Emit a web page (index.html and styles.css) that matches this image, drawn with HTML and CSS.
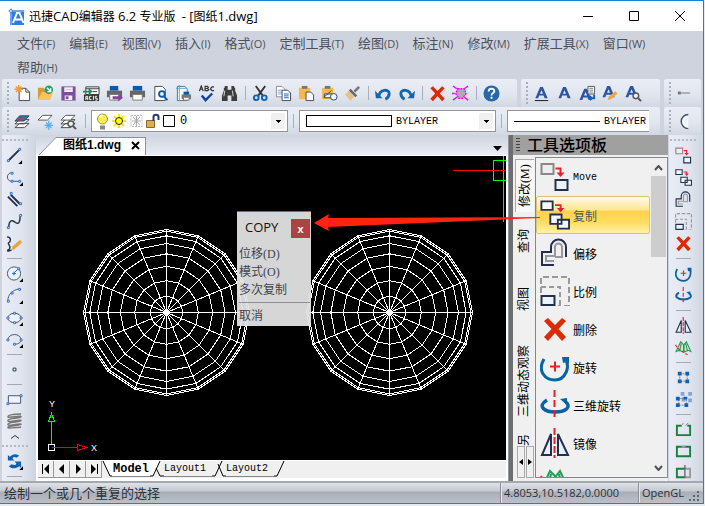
FILE: index.html
```html
<!DOCTYPE html>
<html lang="zh-CN">
<head>
<meta charset="utf-8">
<title>迅捷CAD编辑器 6.2 专业版 - [图纸1.dwg]</title>
<link rel="stylesheet" href="styles.css">
</head>
<body>
<svg class="sprite" aria-hidden="true">
  <symbol id="move" viewBox="0 0 30 30"><path d="M1.5 2h12v10h-12z" fill="#eee" stroke="#888" stroke-width="2"/><path d="M15.500 6.500h5v6" fill="none" stroke="#e8202a" stroke-width="2"/><path d="M16.500 10.500h8l-4 4.500z" fill="#e8202a"/><path d="M15.500 18h12v10h-12z" fill="#eaf4fc" stroke="#22304d" stroke-width="2"/></symbol>
  <symbol id="copy" viewBox="0 0 32 32"><path d="M1.500 1.500h12v9h-12z" fill="#f4f8fc" stroke="#22304d" stroke-width="2"/><path d="M16 5.500h6v5" fill="none" stroke="#e8202a" stroke-width="2"/><path d="M18 8.500h8l-4 4.500z" fill="#e8202a"/><path d="M11 15.500h12v10H11zM19 21h12v9.500H19z" fill="#f4f8fc" stroke="#22304d" stroke-width="2"/></symbol>
  <symbol id="offset" viewBox="0 0 30 30"><path d="M14 27H2V14h9V9a7.500 7.500 0 0 1 15 0v10" fill="none" stroke="#22304d" stroke-width="2"/><path d="M14 23H6v-5h9V9a3.500 3.500 0 0 1 7 0v10h-7" fill="none" stroke="#999" stroke-width="2"/></symbol>
  <symbol id="scale" viewBox="0 0 30 30"><path d="M1 17V1h28v29H18" fill="none" stroke="#999" stroke-width="2" stroke-dasharray="6 3"/><path d="M1 11h19v18" fill="none" stroke="#999" stroke-width="2" stroke-dasharray="5 3"/><path d="M1.500 20h13v9h-13z" fill="#eaf4fc" stroke="#22304d" stroke-width="2"/></symbol>
  <symbol id="erase" viewBox="0 0 30 30"><path d="M4 7l4-3 7 7 7-7 4 3-7.500 8 7.500 8-4 4-7-8-7 8-4-4 7.500-8z" fill="#db2b04"/></symbol>
  <symbol id="rotate" viewBox="0 0 30 30"><path d="M4 7c-7 12 1 21 11 21S31 15 25 7" fill="none" stroke="#0863a5" stroke-width="3"/><path d="M22 5h7v7l-3-2-3 1z" fill="#0863a5"/><path d="M10 14.500h10M15 9.500v10" stroke="#e8202a" stroke-width="2"/></symbol>
  <symbol id="rotate3d" viewBox="0 0 30 30"><path d="M7 10C-4 17 6 22 15 22s18-4 10-11" fill="none" stroke="#0863a5" stroke-width="3.500"/><path d="M20 9l7-1v7z" fill="#0863a5"/><path d="M14.500 0v30" stroke="#e8202a" stroke-width="2" stroke-dasharray="7 3"/></symbol>
  <symbol id="mirror" viewBox="0 0 30 30"><path d="M11 6v21H2zM18 6v21h10z" fill="#e6f1fa" stroke="#22304d" stroke-width="2"/><path d="M14.500 0v30" stroke="#e8202a" stroke-width="2" stroke-dasharray="7 2"/></symbol>
  <symbol id="mirror3d" viewBox="0 0 30 30"><path d="M2 22 10 5l5 5v13l-7-3zM28 22 20 5l-4 5v13l7-3zM8 22l3-14M22 22 19 8" fill="#d7ebdc" stroke="#2f9a55" stroke-width="2"/><path d="M1 10l3 6 18 12" fill="none" stroke="#e8202a" stroke-width="2" stroke-dasharray="5 3"/></symbol>
  <symbol id="letter" viewBox="0 0 18 18"><path fill-rule="evenodd" d="M7.500 2h3l5 12h-3.200l-1-2.800H6.500l-1 2.800H2.500zM9 5.500l-1.700 3.700h3.300z" fill="#2d55a0"/></symbol>
  <symbol id="magnify" viewBox="0 0 18 18"><circle cx="11.500" cy="11.500" r="3" fill="#e8f2fa" stroke="#555" stroke-width="1.500"/><path d="M14 14l3 3" stroke="#555" stroke-width="2"/></symbol>
  <symbol id="layers" viewBox="0 0 18 18"><path d="M1 15.500h10l5-4.500H6zM1 11.500h10l5-4.500H6z" fill="#fff" stroke="#444"/></symbol>
  <defs>
    <path id="hexdec" vector-effect="non-scaling-stroke" d="M83 0 76.700 31.800 58.700 58.700 31.800 76.700 0 83-31.800 76.700-58.700 58.700-76.700 31.800-83 0-76.700-31.800-58.700-58.700-31.800-76.700 0-83 31.800-76.700 58.700-58.700 76.700-31.800z"/>
    <g id="sphere">
      <use href="#hexdec"/><use href="#hexdec" transform="scale(.98)"/><use href="#hexdec" transform="scale(.924)"/><use href="#hexdec" transform="scale(.831)"/><use href="#hexdec" transform="scale(.707)"/><use href="#hexdec" transform="scale(.556)"/><use href="#hexdec" transform="scale(.383)"/><use href="#hexdec" transform="scale(.195)"/>
      <path d="M-83 0H83M0-83V83M-76.700-31.800 76.700 31.800M-58.700-58.700 58.700 58.700M-31.800-76.700 31.800 76.700M31.800-76.700-31.800 76.700M58.700-58.700-58.700 58.700M76.700-31.800-76.700 31.800"/>
      <circle r="2.500" fill="#fff"/>
    </g>
  </defs>
</svg>

<div class="window">
  <header class="titlebar">
    <svg class="applogo" viewBox="0 0 17 17"><path d="M2 2h14v15H2z" fill="#2f7be6"/><path d="M0 3h17M3 0v17" stroke="#a9cdfb"/><path d="M5 15 9 5h2.500l4 10M7 11.500h7" fill="none" stroke="#fff" stroke-width="2"/><circle cx="3" cy="3" r="1.500" fill="#fff" stroke="#2f7be6"/></svg>
    <h1>迅捷<span>CAD</span>编辑器 <span>6.2</span> 专业版&nbsp; <span>- [</span>图纸<span>1.dwg]</span></h1>
    <button class="winbtn" aria-label="最小化"><svg viewBox="0 0 12 12"><path d="M1 6.500h10"/></svg></button>
    <button class="winbtn" aria-label="最大化"><svg viewBox="0 0 12 12"><path d="M1.500 1.500h9v9h-9z"/></svg></button>
    <button class="winbtn" aria-label="关闭"><svg viewBox="0 0 12 12"><path d="M1 1l10 10M11 1 1 11"/></svg></button>
  </header>

  <nav class="menubar">
    <button>文件<span>(F)</span></button><button>编辑<span>(E)</span></button><button>视图<span>(V)</span></button><button>插入<span>(I)</span></button><button>格式<span>(O)</span></button><button>定制工具<span>(T)</span></button><button>绘图<span>(D)</span></button><button>标注<span>(N)</span></button><button>修改<span>(M)</span></button><button>扩展工具<span>(X)</span></button><button>窗口<span>(W)</span></button><button>帮助<span>(H)</span></button>
  </nav>

  <div class="toolrow">
    <div class="toolbar grow">
      <i class="grip"></i>
      <button class="tool" aria-label="新建"><svg viewBox="0 0 18 18"><path d="M5.500 3.500h7l4 4v9h-11z" fill="#fff" stroke="#444"/><path d="M12.500 3.500v4h4" fill="none" stroke="#444"/><path d="M5 0v9M.5 4.500h9M2 1.500l6 6M8 1.500l-6 6" stroke="#f0a023" stroke-width="1.500"/></svg></button>
      <button class="tool" aria-label="打开"><svg viewBox="0 0 18 18"><path d="M1 3h6l1 2h5v3H6l-5 8z" fill="#d99b35"/><path d="M5 8h12l-3 8H1z" fill="#fcc45a"/><circle cx="12.500" cy="5" r="4.500" fill="#27a064"/><path d="M10.500 3l4 4m0-3.500V7h-3.500" fill="none" stroke="#fff" stroke-width="1.500"/></svg></button>
      <button class="tool" aria-label="保存"><svg viewBox="0 0 18 18"><path d="M1.500 1.500h15v15h-15z" fill="#7d4e9c"/><path d="M4.500 2.500h9v5h-9zM5 11h8v5H5z" fill="#f4f0f8"/><path d="M6 5h6" stroke="#c9b8d8"/><path d="M6 13.500h3" stroke="#7d4e9c" stroke-width="3"/></svg></button>
      <button class="tool" aria-label="导入 ACIS"><svg viewBox="0 0 18 18"><path d="M3 2h14v8H3z" fill="#fff" stroke="#333"/><path d="M3 4h14M10 7h5" stroke="#333"/><path d="M1 10h16v7H1z" fill="#333"/><path d="M3 16v-4h2v4M3 14h2M9 12H7v3.500h2M11 11.500v4.500M15 12h-2v2h2v2h-2" fill="none" stroke="#fff"/><path d="M0 6h6V3l4 4-4 4V8H0z" fill="#1f8a56"/></svg></button>
      <button class="tool" aria-label="打印输出"><svg viewBox="0 0 18 18"><path d="M4 1h9v5H4z" fill="#0c58ac"/><path d="M1 6h16v7H1z" fill="#666"/><path d="M4 10h10v6H4z" fill="#fff" stroke="#777"/><path d="M7 12h6V9.500l5 4-5 4V15H7z" fill="#86439b"/></svg></button>
      <button class="tool" aria-label="打印"><svg viewBox="0 0 18 18"><path d="M4 1h10v5H4z" fill="#0c58ac"/><path d="M1 6h16v7H1z" fill="#666"/><path d="M4 10h10v6H4z" fill="#fff" stroke="#777"/></svg></button>
      <button class="tool" aria-label="打印预览"><svg viewBox="0 0 18 18"><path d="M3 1.500h8l3 3V16.500H3z" fill="#fff" stroke="#444"/><circle cx="10.500" cy="9.500" r="3" fill="#e8f4fc" stroke="#0c58ac" stroke-width="2"/><path d="M12.500 12l4 4" stroke="#0c58ac" stroke-width="2"/></svg></button>
      <button class="tool" aria-label="页面设置"><svg viewBox="0 0 18 18"><path d="M2.500 1.500h8l2.500 3v12H2.500z" fill="#fff" stroke="#667"/><path d="M4.500 0v17M1 3.500h12" stroke="#45a9d8"/><path d="M9 7h6v4H9z" fill="#0c58ac"/><path d="M7 10h10v5H7z" fill="#777"/><path d="M9 13h6v3H9z" fill="#fff" stroke="#777"/></svg></button>
      <button class="tool" aria-label="拼写检查"><svg viewBox="0 0 18 18"><path d="M1.500 6.500 3.500 1l2 5.500M2.500 4.500h2M7.500 6V1.500H10L11 2.500 10 3.700H8h2L11.500 5 10 6zM17 2h-2l-1.500 1.500v1L15 6h2" fill="none" stroke="#333" stroke-width="1.300"/><path d="M4 11l4 5 7-7" fill="none" stroke="#0c44a4" stroke-width="2.500"/></svg></button>
      <button class="tool" aria-label="查找"><svg viewBox="0 0 18 18"><path d="M3 3h4v2h4V3h4v3l2 5v6h-6v-6H7v6H1v-6l2-5zM4 1h3v2H4zM11 1h3v2h-3z" fill="#3c3c3c"/><path d="M4 6l-1 6M12 6l1 6" stroke="#ddd"/></svg></button>
      <i class="sep"></i>
      <button class="tool" aria-label="剪切"><svg viewBox="0 0 18 18"><path d="M4 1l8 11M14 1 6 12" stroke="#333" stroke-width="2"/><circle cx="4.500" cy="13.500" r="2.500" fill="none" stroke="#0c62b8" stroke-width="2"/><circle cx="13" cy="13.500" r="2.500" fill="none" stroke="#0c62b8" stroke-width="2"/></svg></button>
      <button class="tool" aria-label="复制"><svg viewBox="0 0 18 18"><path d="M1.500 1.500h6l3 3v8h-9z" fill="#fff" stroke="#889"/><path d="M3 5.500h5M3 7.500h5M3 9.500h5" stroke="#7aa6d6"/><path d="M7.500 5.500h6l3 3v8h-9z" fill="#fff" stroke="#445"/><path d="M9.500 9.500h5M9.500 11.500h5M9.500 13.500h5" stroke="#0c62b8"/></svg></button>
      <button class="tool" aria-label="粘贴"><svg viewBox="0 0 18 18"><path d="M1 3h12v12H1z" fill="#f8b74c"/><path d="M4 1h6v3H4z" fill="#777"/><path d="M8.500 7.500h5l3 3v6h-8z" fill="#fff" stroke="#444"/></svg></button>
      <button class="tool" aria-label="选择性粘贴"><svg viewBox="0 0 18 18"><path d="M1 3h12v12H1z" fill="#f8b74c"/><path d="M4 1h6v3H4z" fill="#777"/><path d="M3.500 9.500h9v4h-9zM3 13l8-7" fill="#eaf4fc" stroke="#33415e"/><circle cx="13.500" cy="12.500" r="3.500" fill="#eaf4fc" stroke="#33415e"/></svg></button>
      <button class="tool" aria-label="格式刷"><svg viewBox="0 0 18 18"><path d="M15 1l2 2-5 5-2-2z" fill="#777"/><path d="M7 4l7 7-2 2-7-7z" fill="#666"/><path d="M5 6l6 6-4 5L1 10z" fill="#e9c08c"/></svg></button>
      <i class="sep"></i>
      <button class="tool" aria-label="撤销"><svg viewBox="0 0 18 18"><path d="M4 12C5 4 15 4 15 9c0 3-2 5-4 6" fill="none" stroke="#1464ae" stroke-width="3"/><path d="M0 6l8 8H1z" fill="#1464ae"/></svg></button>
      <button class="tool" aria-label="重做"><svg viewBox="0 0 18 18"><path d="M14 12C13 4 3 4 3 9c0 3 2 5 4 6" fill="none" stroke="#1464ae" stroke-width="3"/><path d="M18 6l-8 8h7z" fill="#1464ae"/></svg></button>
      <i class="sep"></i>
      <button class="tool" aria-label="删除"><svg viewBox="2 2 26 26"><use href="#erase" width="30" height="30"/></svg></button>
      <button class="tool" aria-label="清理"><svg viewBox="0 0 18 18"><path d="M6 4h7l2 5-4 5H7L4 9z" fill="#b9a5b9" stroke="#f0e" stroke-width="1.500" stroke-dasharray="2 1"/><path d="M1 1l4 3M17 1l-4 3M1 16l4-3M17 16l-4-3M0 9h3" stroke="#f0e" stroke-width="1.500"/></svg></button>
      <i class="sep"></i>
      <button class="tool" aria-label="帮助"><svg viewBox="0 0 18 18"><circle cx="9" cy="9" r="8.500" fill="#2868a8"/><path d="M6 7c0-4 6-4 6-.5 0 2-3 2-3 4.500M9 12.500v2" fill="none" stroke="#fff" stroke-width="2"/></svg></button>
    </div>
    <div class="toolbar text-tools">
      <i class="grip"></i>
      <button class="tool" aria-label="多行文字"><svg viewBox="0 0 18 18"><use href="#letter"/><path d="M2 16.500h14" stroke="#111"/></svg></button>
      <button class="tool" aria-label="单行文字"><svg viewBox="0 0 18 18"><use href="#letter"/></svg></button>
      <button class="tool" aria-label="导入文字"><svg viewBox="0 0 18 18"><use href="#letter" x="-2" y="2"/><path d="M9.500 1.500h7v8h-7z" fill="#fff" stroke="#555"/><path d="M11 3.500h4M11 5.500h4M11 7.500h4" stroke="#777"/><path d="M16 10v4h-5m2-2-2.500 2 2.500 2" fill="none" stroke="#0c62b8" stroke-width="2"/></svg></button>
      <button class="tool" aria-label="编辑文字"><svg viewBox="0 0 18 18"><use href="#letter" x="-2" y="-1"/><path d="M6 16l1-3.500 7-6 2.500 2.500-7 6z" fill="#efa63a"/></svg></button>
      <button class="tool" aria-label="查找文字"><svg viewBox="0 0 18 18"><use href="#letter" x="-2" y="-1"/><use href="#magnify"/></svg></button>
    </div>
    <div class="toolbar narrow">
      <i class="grip"></i>
      <button class="tool" aria-label="标注"><svg viewBox="0 0 18 18"><path d="M3 8.500h12" stroke="#777"/><path d="M2 7h3v3H2z" fill="#777"/></svg></button>
    </div>
  </div>

  <div class="toolrow">
    <div class="toolbar grow layerbar">
      <i class="grip"></i>
      <button class="tool" aria-label="图层管理"><svg viewBox="0 0 18 18"><use href="#layers"/><path d="M1 8.500h10l5-5.500H6z" fill="#3773a8" stroke="#345"/><path d="M5 5h3v3H5z" fill="#f22"/></svg></button>
      <button class="tool" aria-label="冻结图层"><svg viewBox="0 0 18 18"><path d="M1 7.500h10l5-5H6z" fill="#fff" stroke="#555"/><path d="M12.500 8v10M8 13h9M9.500 10l6 6M15.500 10l-6 6" stroke="#5cacf0" stroke-width="1.300"/></svg></button>
      <button class="tool" aria-label="图层浏览"><svg viewBox="0 0 18 18"><use href="#layers"/><path d="M1 7.500h10l5-5H6z" fill="#fff" stroke="#555"/><use href="#magnify"/></svg></button>
      <i class="sep"></i>
      <div class="combo layer">
        <svg viewBox="0 0 84 20"><path d="M8 14.500h5v4H8z" fill="#888"/><circle cx="10.500" cy="8" r="5" fill="#f8ee4a" stroke="#a39a1b"/><path d="M8 6.500c0-2 2-2 2.500-2" stroke="#fff" fill="none" stroke-width="2"/><path d="M27 3v14M20 10h14M22 5l10 10M32 5 22 15" stroke="#ffe800" stroke-width="2"/><circle cx="27" cy="10" r="3.500" fill="#ff0" stroke="#222"/><path d="M39 4.500h11v11H39z" fill="none" stroke="#bbb" stroke-dasharray="2 1"/><path d="M44.500 5v10M40 10h9M41 6l7 8M48 6l-7 8" stroke="#aaa"/><path d="M54.500 9.500h8v7h-8z" fill="#dcae58" stroke="#8c6a25"/><path d="M61.500 10V6c0-3 5-3 5 0v3" fill="none" stroke="#223a7e" stroke-width="2"/><path d="M71.500 4.500h11v11h-11z" fill="#fff" stroke="#000"/></svg>
        <select aria-label="图层"><option>0</option></select>
      </div>
      <i class="sep"></i>
      <div class="combo color"><i class="swatch"></i><select aria-label="颜色"><option>BYLAYER</option></select></div>
      <i class="sep"></i>
      <div class="combo line"><i class="stroke"></i><select aria-label="线型"><option>BYLAYER</option></select></div>
    </div>
    <div class="toolbar narrow">
      <i class="grip"></i>
      <button class="tool" aria-label="圆弧"><svg viewBox="0 0 18 18"><path d="M13 1.500a7.500 7.500 0 1 0 0 15" fill="#f3f7fc" stroke="#44506b" stroke-width="1.500"/></svg></button>
    </div>
  </div>

  <main class="work">
    <aside class="side">
      <i class="hgrip"></i>
      <button class="tool" aria-label="直线"><svg viewBox="0 0 18 18"><path d="M3 14 14 3" stroke="#22304d" stroke-width="2"/><path class="node" d="M1.500 13.500h2v2h-2zM13.500 1.500h2v2h-2z"/><path d="M17 14v4h-4z"/></svg></button>
      <button class="tool" aria-label="多段线"><svg viewBox="0 0 18 18"><path d="M6 4C0 4 0 13 6 13h8" fill="none" stroke="#44506b"/><path class="node" d="M5.500 3.500h2v2h-2zM5.500 12h2v2h-2zM13.500 12h2v2h-2z"/><path d="M18 14v4h-4z"/></svg></button>
      <button class="tool" aria-label="多线"><svg viewBox="0 0 18 18"><path d="M5 4l10 10M2 6l10 10" stroke="#22304d" stroke-width="2"/><path class="node" d="M4.500 1.500h2v2h-2zM14.500 12.500h2v2h-2z"/></svg></button>
      <button class="tool" aria-label="样条曲线"><svg viewBox="0 0 18 18"><path d="M3 15c0-8 4-8 7-5 4 3 5-2 5-7" fill="none" stroke="#22304d" stroke-width="1.500"/><path class="node" d="M1.500 14.500h2v2h-2zM14.500 1.500h2v2h-2z"/></svg></button>
      <button class="tool" aria-label="徒手画"><svg viewBox="0 0 18 18"><path d="M1 2c5 0 4 5 2 6s2 3 1 6-3 1-2 3l4-1" fill="none" stroke="#22304d" stroke-width="1.500"/><path d="M6 16l1-4 8-7 2 3-8 7z" fill="#eaa33a"/></svg></button>
      <i class="hsep"></i>
      <button class="tool" aria-label="圆"><svg viewBox="0 0 18 18"><circle cx="8.500" cy="9" r="7" fill="#e9f1fb" stroke="#44506b"/><path d="M6.500 9h4M8.500 7v4M9 8l4-4" stroke="#1e5ca8"/><path class="node" d="M12.500 3h2v2h-2z"/><path d="M18 14v4h-4z"/></svg></button>
      <button class="tool" aria-label="圆弧"><svg viewBox="0 0 18 18"><path d="M2 14C2 8 7 3 14 2" fill="none" stroke="#44506b"/><path class="node" d="M1.500 14h2v2h-2zM5.500 5.500h2v2h-2zM13.500 1.500h2v2h-2z"/><path d="M18 14v4h-4z"/></svg></button>
      <button class="tool" aria-label="椭圆"><svg viewBox="0 0 18 18"><ellipse cx="9" cy="9.500" rx="7" ry="5" fill="#e9f1fb" stroke="#44506b"/><path class="node" d="M1 8.500h2v2H1zM15 8.500h2v2h-2zM8 3.500h2v2H8zM8 13.500h2v2H8z"/><path d="M18 14v4h-4z"/></svg></button>
      <button class="tool" aria-label="椭圆弧"><svg viewBox="0 0 18 18"><path d="M2 9C3 2 15 2 16 9c0 4-4 5-7 5" fill="none" stroke="#44506b"/><path class="node" d="M1 8.500h2v2H1zM15 8.500h2v2h-2zM8 13h2v2H8z"/><path d="M18 14v4h-4z"/></svg></button>
      <i class="hsep"></i>
      <button class="tool" aria-label="点"><svg viewBox="0 0 18 18"><path d="M7.500 7.500h3v3h-3z" fill="#fff" stroke="#22304d"/></svg></button>
      <i class="hsep"></i>
      <button class="tool" aria-label="矩形"><svg viewBox="0 0 18 18"><path d="M2.500 5h13v8h-13z" fill="#eef4fb" stroke="#44506b"/><path class="node" d="M1 12.500h2v2H1zM15 4h2v2h-2z"/></svg></button>
      <button class="tool" aria-label="螺旋"><svg viewBox="0 0 18 18"><path d="M16 1C10 1 2 2 2 4s14-2 14 0S2 5 2 8s14-2 14 0S2 9 2 12s14-2 14 0S2 13 2 15s9 0 14 0" fill="none" stroke="#777" stroke-width="1.500"/></svg></button>
      <button class="more" aria-label="更多"><svg viewBox="0 0 8 4"><path d="M0 3.500l4-3 4 3" fill="none" stroke="#333"/></svg></button>
      <i class="hgrip"></i>
      <button class="tool" aria-label="重画"><svg viewBox="0 0 18 18"><path d="M2 8V2l2 2c4-4 8-3 10-1l-3 2c-2-1-3-1-4 1l2 2zM16 9v7l-2-2c-4 3-8 3-11 0l3-2c3 1 4 1 5-1l-2-2z" fill="#1160b0"/><path d="M18 14v4h-4z"/></svg></button>
      <i class="hsep"></i>
    </aside>

    <section class="document">
      <div class="filetabs">
        <div class="filetab">
          <svg viewBox="0 0 20 20"><path d="M0 20 17 2.500h3V20z" fill="#fff"/><path d="M0 20 17 2.500h3" fill="none" stroke="#8c92a0"/></svg>
          <span>图纸1.dwg</span>
          <button aria-label="关闭文档"><svg viewBox="0 0 9 9"><path d="M1 1l7 7M8 1 1 8" stroke="#000" stroke-width="2"/></svg></button>
        </div>
        <button class="tablist" aria-label="文档列表"><svg viewBox="0 0 9 5"><path d="M0 0h9L4.500 5z"/></svg></button>
      </div>
      <div class="canvas">
        <svg class="drawing" viewBox="0 0 468 305" preserveAspectRatio="xMinYMin slice" shape-rendering="crispEdges">
          <g fill="none" stroke="#fff">
            <use href="#sphere" transform="translate(128.500 156.500)"/>
            <use href="#sphere" transform="translate(351.500 156.500)"/>
            <path d="M10.500 288.500h6v6h-6z"/>
          </g>
          <path d="M13.500 288V265M10.500 265.500l3-8 3 8zM468 4.500h-12.500v20H468M465.500 0v66" fill="none" stroke="#0f0"/>
          <path d="M14 291.500h25M39.500 288.500l9 3-9 3zM415 14.500h53" fill="none" stroke="#f00"/>
          <text x="11" y="251">Y</text><text x="53" y="295">X</text>
        </svg>
        <div class="popup" role="dialog" aria-label="COPY">
          <header><h2>COPY</h2><button aria-label="关闭">x</button></header>
          <button>位移(D)</button><button>模式(O)</button><button>多次复制</button>
          <hr>
          <button>取消</button>
        </div>
      </div>
      <div class="layouts">
        <button class="nav" aria-label="第一个"><svg viewBox="0 0 10 10"><path d="M1 0h1v10H1zM8 0v10L3 5z"/></svg></button>
        <button class="nav" aria-label="上一个"><svg viewBox="0 0 10 10"><path d="M7 0v10L2 5z"/></svg></button>
        <button class="nav" aria-label="下一个"><svg viewBox="0 0 10 10"><path d="M3 0v10l5-5z"/></svg></button>
        <button class="nav" aria-label="最后一个"><svg viewBox="0 0 10 10"><path d="M2 0v10l5-5zM8 0h1v10H8z"/></svg></button>
        <svg class="edge" viewBox="0 0 10 16"><path d="M1 0h9v15H8z" fill="#fff"/><path d="M1 0l7 15h2" fill="none" stroke="#000"/></svg>
        <button class="layout current">Model</button>
        <svg class="edge wide" viewBox="0 0 14 16"><path d="M0 0h10L3 15H0z" fill="#fff"/><path d="M10 0 3 15H0M6 7l4 8h4" fill="none" stroke="#000"/></svg>
        <button class="layout">Layout1</button>
        <svg class="edge wide" viewBox="0 0 14 16"><path d="M10 0 3 15H0M6 3l5 12h3" fill="none" stroke="#000"/></svg>
        <button class="layout">Layout2</button>
        <svg class="edge wide" viewBox="0 0 14 16"><path d="M10 0 3 15H0" fill="none" stroke="#000"/></svg>
      </div>
    </section>

    <section class="palette">
      <header><i class="dots"></i><h2>工具选项板</h2></header>
      <div class="palette-body">
        <div class="tabs">
          <button class="t1 on">修改(M)</button><button class="t2">查询</button><button class="t2">视图</button><button class="t3">三维动态观察</button><button class="t4">另</button>
          <div class="tabscroll"><button aria-label="上一页"><svg viewBox="0 0 4 6"><path d="M4 0v6L0 3z"/></svg></button><button aria-label="下一页"><svg viewBox="0 0 4 6"><path d="M0 0v6l4-3z"/></svg></button></div>
        </div>
        <div class="list">
          <div class="items">
            <button><svg><use href="#move"/></svg>Move</button>
            <button class="active"><svg><use href="#copy"/></svg>复制</button>
            <button><svg><use href="#offset"/></svg>偏移</button>
            <button><svg><use href="#scale"/></svg>比例</button>
            <button><svg><use href="#erase"/></svg>删除</button>
            <button><svg><use href="#rotate"/></svg>旋转</button>
            <button><svg><use href="#rotate3d"/></svg>三维旋转</button>
            <button><svg><use href="#mirror"/></svg>镜像</button>
            <button aria-label="三维镜像"><svg><use href="#mirror3d"/></svg></button>
          </div>
          <div class="scroll">
            <svg viewBox="0 0 9 6"><path d="M1 5l3.500-4L8 5"/></svg>
            <i></i>
            <svg viewBox="0 0 9 6"><path d="M1 1l3.500 4L8 1"/></svg>
          </div>
        </div>
      </div>
    </section>

    <aside class="side right">
      <i class="hgrip"></i>
      <button class="tool" aria-label="移动"><svg><use href="#move"/></svg></button>
      <button class="tool" aria-label="复制"><svg><use href="#copy"/></svg></button>
      <button class="tool" aria-label="偏移"><svg><use href="#offset"/></svg></button>
      <button class="tool" aria-label="比例"><svg><use href="#scale"/></svg></button>
      <button class="tool" aria-label="删除"><svg viewBox="2 2 26 26"><use href="#erase" width="30" height="30"/></svg></button>
      <i class="hsep"></i>
      <button class="tool" aria-label="旋转"><svg><use href="#rotate"/></svg></button>
      <button class="tool" aria-label="三维旋转"><svg><use href="#rotate3d"/></svg></button>
      <i class="hsep"></i>
      <button class="tool" aria-label="镜像"><svg><use href="#mirror"/></svg></button>
      <button class="tool" aria-label="三维镜像"><svg><use href="#mirror3d"/></svg></button>
      <i class="hsep"></i>
      <button class="tool" aria-label="阵列"><svg viewBox="0 0 18 18"><path d="M5 5h8v8H5z" fill="none" stroke="#777" stroke-dasharray="2 1"/><path d="M3 3h4v4H3zM11 3h4v4h-4zM3 11h4v4H3zM11 11h4v4h-4z" fill="#155fb5"/></svg></button>
      <button class="tool" aria-label="三维阵列"><svg viewBox="0 0 18 18"><path d="M6 1h4v4H6zM14 1h4v4h-4zM14 8h4v4h-4zM7 7h4v4H7z" fill="#7fa8da"/><path d="M4 8h8v7H4z" fill="none" stroke="#777" stroke-dasharray="2 1"/><path d="M1 6h4v4H1zM9 6h4v3H9zM1 13h4v4H1zM10 13h4v4h-4z" fill="#155fb5"/></svg></button>
      <i class="hsep"></i>
      <button class="tool" aria-label="打断"><svg viewBox="0 0 18 18"><path d="M7 5H2v10h14V5h-3" fill="none" stroke="#16803f" stroke-width="2"/><path d="M6 6l3-4M11 5l3-3" stroke="#888"/></svg></button>
      <button class="tool" aria-label="打断于点"><svg viewBox="0 0 18 18"><path d="M2 4h14v10H2z" fill="none" stroke="#16803f" stroke-width="2"/><path d="M7 4h4" stroke="#999" stroke-width="2"/></svg></button>
      <button class="tool" aria-label="修剪"><svg viewBox="0 0 18 18"><path d="M10 4H2v9h8" fill="none" stroke="#16803f" stroke-width="2"/><path d="M11 4h5v9h-5" fill="none" stroke="#999" stroke-width="2"/><path d="M10.500 0v14" stroke="#333"/></svg></button>
    </aside>
    <svg class="pointer" viewBox="0 0 226 18"><path d="M0 9 15 0l-1 4L226 3v1L14 13l1 4z" fill="#ff2312"/></svg>
  </main>

  <footer class="status">
    <span class="hint">绘制一个或几个重复的选择</span>
    <span class="coords">4.8053,10.5182,0.0000</span>
    <span class="engine">OpenGL</span>
    <svg viewBox="0 0 12 12"><path d="M9 1h2v2H9zM5 5h2v2H5zM9 5h2v2H9zM1 9h2v2H1zM5 9h2v2H5zM9 9h2v2H9z" fill="#5e6470"/></svg>
  </footer>
</div>
</body>
</html>
```
FILE: styles.css
```css
* { box-sizing: border-box; }

body {
  margin: 0;
  height: 100vh;
  padding: 0 1px 2px 0;
  overflow: hidden;
  background: #e6ebf0;
  font: 12px "Open Sans", "Noto Sans CJK SC", sans-serif;
  color: #000;
}

button, select {
  appearance: none;
  margin: 0;
  padding: 0;
  border: 0;
  border-radius: 0;
  background: none;
  font: inherit;
  color: inherit;
}

h1, h2 { margin: 0; font-weight: 400; }
svg { display: block; flex: none; }
.sprite { position: absolute; width: 0; height: 0; }

.window {
  display: flex;
  flex-direction: column;
  height: 100%;
  border: solid #1883d7;
  border-width: 1px 1px 1px 0;
  background: #cfd3dd;
}

/* Title bar */
.titlebar {
  display: flex;
  flex: none;
  align-items: center;
  height: 30px;
  padding-left: 8px;
  background: #fff;
}
.applogo { width: 17px; height: 17px; }
.titlebar h1 { flex: 1; padding-left: 4px; font-size: 12px; line-height: 28px; white-space: nowrap; }
.titlebar h1 span { font-size: 13px; }
.winbtn { display: grid; place-items: center; width: 46px; height: 28px; }
.winbtn svg { width: 12px; height: 12px; fill: none; stroke: #000; }

/* Menu */
.menubar {
  display: flex;
  flex: none;
  flex-wrap: wrap;
  column-gap: 14px;
  height: 48px;
  padding: 0 17px;
  color: #4c505c;
}
.menubar button { height: 24px; font-size: 13px; line-height: 20px; white-space: nowrap; }
.menubar span { font-size: 11px; }

/* Toolbars */
.toolrow { display: flex; flex: none; gap: 4px; height: 28px; padding: 0 2px; }
.toolbar {
  display: flex;
  flex: none;
  align-items: center;
  min-width: 0;
  padding-left: 5px;
  border-radius: 2px;
  background: linear-gradient(#eaedf5, #e1e6ef 55%, #d2d8e3);
}
.grow { flex: 1; }
.text-tools { width: 139px; }
.narrow { width: 37px; overflow: hidden; }
.grip {
  flex: none;
  width: 4px;
  height: 22px;
  background: repeating-linear-gradient(#a9afbb 0 2px, transparent 2px 4px) left / 2px 100% no-repeat;
}
.sep { flex: none; width: 8px; height: 14px; background: linear-gradient(#a9aeb9, #a9aeb9) center / 1px 100% no-repeat; }
.layerbar .sep { width: 11px; }
.tool { display: grid; flex: none; place-items: center; width: 23px; height: 22px; }
.tool svg { width: 17px; height: 17px; }
.node { fill: #fff; stroke: #2c6cc0; }

.combo {
  position: relative;
  display: flex;
  flex: none;
  align-items: center;
  width: 197px;
  height: 22px;
  border: 1px solid #959595;
  background: #fff;
}
.combo::after {
  content: "";
  flex: none;
  width: 14px;
  height: 16px;
  margin-right: 2px;
  background: linear-gradient(#000, #000) center 7px / 5px 1px no-repeat, linear-gradient(#000, #000) center 8px / 3px 1px no-repeat, linear-gradient(#000, #000) center 9px / 1px 1px no-repeat, #f0f0f0;
}
.combo svg { width: 84px; height: 20px; }
.combo select { flex: 1; min-width: 0; padding-left: 4px; font: 10px "Liberation Mono", monospace; }
.combo.layer select { font-size: 12px; }
.combo.line { flex: 0 1 142px; border-right: 0; }
.combo.line::after { display: none; }
.swatch { width: 86px; height: 12px; margin-left: 6px; border: 1px solid #000; }
.stroke { width: 86px; height: 1px; margin-left: 6px; background: #000; }

/* Work area */
.work { position: relative; display: flex; flex: 1; min-height: 0; }
.side {
  display: flex;
  flex: none;
  flex-direction: column;
  align-items: center;
  width: 33px;
  margin-left: 2px;
  padding: 1px 8px 0 0;
  overflow: hidden;
  background: linear-gradient(90deg, #eaedf6, #dfe4ee 60%, #d0d6e1);
}
.side.right { width: 34px; margin-left: 1px; padding-right: 6px; }
.hgrip {
  flex: none;
  width: 26px;
  height: 8px;
  background: repeating-linear-gradient(90deg, #b3b8c3 0 2px, transparent 2px 4px) center / 100% 2px no-repeat;
}
.hsep { flex: none; width: 15px; height: 8px; background: linear-gradient(#a5a9b3, #a5a9b3) center / 100% 1px no-repeat; }
.more { display: grid; flex: none; place-items: center; width: 23px; height: 10px; }
.more svg { width: 8px; height: 4px; }

.document { display: flex; flex: 1; flex-direction: column; min-width: 0; margin-left: 1px; border-right: 1px solid #8f949e; }
.filetabs {
  display: flex;
  flex: none;
  align-items: flex-end;
  justify-content: space-between;
  height: 20px;
  padding: 0 6px 0 3px;
  background: linear-gradient(#cfd4de, #e9edf5);
}
.filetab { display: flex; align-items: center; height: 20px; }
.filetab > svg { width: 20px; height: 20px; }
.filetab span, .filetab button { height: 18px; margin-top: 2px; border-top: 1px solid #8c92a0; background: #fff; }
.filetab span { padding: 0 10px 0 4px; font: bold 12px/14px "Liberation Sans", "Noto Sans CJK SC", sans-serif; }
.filetab button { display: grid; place-items: center; width: 15px; padding: 0 5px 3px 0; border-right: 1px solid #8c92a0; }
.filetab button svg { width: 9px; height: 9px; }
.tablist { height: 14px; }
.tablist svg { width: 9px; height: 5px; }

.canvas {
  position: relative;
  flex: 1;
  min-height: 0;
  border: solid #fff;
  border-width: 1px 2px 0 2px;
  overflow: hidden;
  background: #000;
}
.drawing { width: 468px; height: 305px; }
.drawing text { fill: #fff; font: 9px "Liberation Sans", sans-serif; }

.popup {
  position: absolute;
  left: 199px;
  top: 55px;
  display: flex;
  flex-direction: column;
  width: 74px;
  padding: 0 1px 1px 2px;
  border-top: 1px solid #3a78bd;
  background: rgb(225 225 225 / 95%);
  color: #40444c;
}
.popup header { display: flex; align-items: center; justify-content: space-between; height: 33px; padding-left: 6px; }
.popup h2 { font-size: 13px; line-height: 20px; padding-bottom: 4px; color: #111; }
.popup header button { width: 19px; height: 19px; background: #ac4343; color: #fff; font: bold 11px/16px "Liberation Sans", sans-serif; text-align: center; }
.popup > button { height: 18px; font: 12px/18px "Liberation Serif", "Noto Sans CJK SC", serif; text-align: left; white-space: nowrap; }
.popup hr { width: 100%; height: 1px; margin: 3px 0 4px; border: 0; background: #8d8f94; }

.layouts { display: flex; flex: none; height: 21px; border: solid #fff; border-width: 1px 2px 3px; background: #f0f0f0; }
.nav { display: grid; place-items: center; width: 16px; height: 17px; border: solid #999; border-width: 0 1px 1px 0; }
.nav svg { width: 10px; height: 10px; }
.edge { width: 10px; height: 16px; }
.edge.wide { width: 14px; }
.layout { height: 16px; padding: 0 6px 0 0; border-bottom: 1px solid #888; font: 10px/14px "Liberation Mono", monospace; }
.layout.current { padding: 0 1px; background: #fff; font-size: 12px; font-weight: 700; }

/* Tool palette */
.palette { display: flex; flex: none; flex-direction: column; width: 159px; padding-bottom: 3px; border-left: 4px solid #6d6d6d; background: #f0f0f0; }
.palette header { display: flex; flex: none; align-items: center; height: 20px; background: #a0a0a0; }
.palette h2 { padding-left: 7px; font-size: 16px; font-weight: 500; line-height: 20px; }
.dots { width: 4px; height: 14px; margin-left: 3px; background: repeating-linear-gradient(#444 0 1px, transparent 1px 3px); }
.palette-body { display: flex; flex: 1; min-height: 0; padding-top: 2px; }
.tabs { display: flex; flex-direction: column; width: 22px; padding: 2px 1px 0 2px; overflow: hidden; }
.tabs > button {
  flex: none;
  width: 19px;
  font: 12px/19px "Liberation Serif", "Noto Sans CJK SC", serif;
  text-align: center;
  white-space: nowrap;
  writing-mode: vertical-rl;
  text-orientation: sideways;
  transform: rotate(180deg);
}
.tabs .on { border: solid #aaa; border-width: 0 1px 1px 0; background: #f8f8f8; }
.t1 { height: 53px; }
.t2 { height: 58px; }
.t3 { height: 106px; }
.tabs .t4 { flex: 1; min-height: 0; text-align: left; }
.tabscroll { display: flex; flex: none; gap: 1px; margin-left: 2px; }
.tabscroll button { display: grid; place-items: center; width: 8px; height: 32px; border: 1px solid #aaa; }
.tabscroll svg { width: 4px; height: 6px; }
.list { display: flex; flex: 1; min-width: 0; border: 1px solid #828790; }
.items { display: flex; flex: 1; flex-direction: column; min-width: 0; overflow: hidden; }
.items button {
  display: flex;
  flex: none;
  align-items: center;
  gap: 3px;
  height: 38px;
  padding-left: 3px;
  border: 1px solid transparent;
  font: 12px "Noto Sans CJK SC", sans-serif;
}
.items button:first-child { font-family: "Liberation Mono", monospace; font-size: 10px; }
.items svg { width: 30px; height: 30px; }
.items .active {
  border-color: #d9c37c;
  border-radius: 2px;
  background: linear-gradient(#fffae6, #ffe694 36%, #ffd24a 40%, #ffdc62 70%, #fff3a8);
  color: #555;
}
.scroll { display: flex; flex: none; flex-direction: column; align-items: center; width: 17px; padding: 7px 1px 6px; }
.scroll svg { width: 9px; height: 6px; fill: none; stroke: #505050; stroke-width: 2; }
.scroll i { width: 15px; height: 81px; margin: 5px 0 auto; background: #cdcdcd; }

.pointer { position: absolute; right: 163px; top: 79px; width: 226px; height: 18px; pointer-events: none; }

/* Status bar */
.status {
  display: flex;
  flex: none;
  align-items: center;
  height: 22px;
  border-top: 2px solid #a3a8b1;
  background: linear-gradient(#dfe3e9, #c4c8cf 40%, #a9adb5 45%, #bcc0c9);
  font-size: 11px;
  color: #2e3138;
}
.status span { line-height: 20px; white-space: nowrap; }
.hint { flex: 1; padding-left: 4px; font-size: 13px; }
.coords, .engine { border-left: 1px solid #8b8f97; box-shadow: inset 1px 0 #e3e6eb; padding-left: 3px; }
.coords { width: 138px; }
.engine { width: 48px; }
.status svg { width: 12px; height: 12px; margin: 5px 3px 0 2px; }
```
